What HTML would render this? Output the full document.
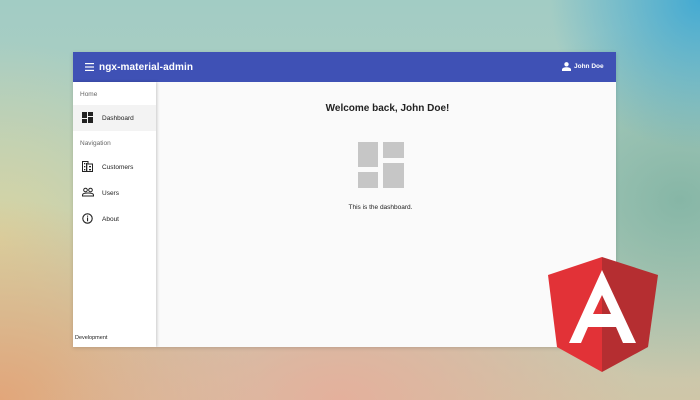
<!DOCTYPE html>
<html><head><style>
*{margin:0;padding:0;box-sizing:border-box}
body{width:700px;height:400px;overflow:hidden;position:relative;font-family:"Liberation Sans",sans-serif;
background:
radial-gradient(circle at 700px 0px,#44aad2 0,rgba(68,170,210,0) 150px),
radial-gradient(ellipse 220px 180px at 680px 200px,#86b6a6 0,rgba(134,182,166,0) 100%),
radial-gradient(ellipse 300px 180px at 340px 400px,#e4b09c 0,rgba(228,176,156,0) 100%),
radial-gradient(ellipse 260px 200px at 0px 400px,#e2a67a 0,rgba(226,166,122,0) 100%),
radial-gradient(ellipse 200px 200px at 0px 240px,#d8d4a2 0,rgba(216,212,162,0) 100%),
linear-gradient(180deg,#a2ccc4 0%,#b4d0c0 50%,#cfc6a8 100%);}
.win{position:absolute;left:73px;top:52px;width:543px;height:295px;background:#fafafa;overflow:hidden;box-shadow:0 1px 4px rgba(0,0,0,.15)}
.hdr{position:absolute;left:0;top:0;width:543px;height:30px;background:#3f51b5;color:#fff}
.title{position:absolute;left:26px;top:10px;font-size:10px;font-weight:bold;letter-spacing:.1px}
.user{position:absolute;left:501px;top:11px;font-size:6.5px;font-weight:bold}
.side{position:absolute;left:0;top:30px;width:83px;height:265px;background:#fff;box-shadow:1px 0 3px rgba(0,0,0,.2)}
.sec{position:absolute;left:7px;font-size:6.5px;color:#666}
.item{position:absolute;left:0;width:83px;height:25px;font-size:6.5px;color:#222}
.item span{position:absolute;left:29px;top:10px}
.item svg{position:absolute;left:9px;top:7px}
</style></head><body>
<div class="win">
 <div class="hdr">
  <svg style="position:absolute;left:12px;top:11px" width="9" height="8"><rect y="0" width="9" height="1.2" fill="#fff"/><rect y="3.4" width="9" height="1.2" fill="#fff"/><rect y="6.8" width="9" height="1.2" fill="#fff"/></svg>
  <div class="title">ngx-material-admin</div>
  <svg style="position:absolute;left:489px;top:10px" width="9" height="9"><circle cx="4.5" cy="2.3" r="2.2" fill="#fff"/><path d="M0 9V7.5C0 6 2.5 5.3 4.5 5.3S9 6 9 7.5V9Z" fill="#fff"/></svg>
  <div class="user">John Doe</div>
 </div>
 <div class="side">
  <div class="sec" style="top:9px">Home</div>
  <div class="item" style="top:23px;background:#f3f3f3;height:26px"><svg width="11" height="11"><rect x="0" y="0" width="5" height="6" fill="#222"/><rect x="6" y="0" width="5" height="4" fill="#222"/><rect x="0" y="7" width="5" height="4" fill="#222"/><rect x="6" y="5" width="5" height="6" fill="#222"/></svg><span>Dashboard</span></div>
  <div class="sec" style="top:58px">Navigation</div>
  <div class="item" style="top:72px"><svg width="11" height="11"><path d="M0.5 10.5V0.5H6V3H10.5V10.5Z" fill="none" stroke="#222"/><rect x="2" y="2" width="1.3" height="1.3" fill="#222"/><rect x="2" y="5" width="1.3" height="1.3" fill="#222"/><rect x="2" y="8" width="1.3" height="1.3" fill="#222"/><rect x="7" y="5" width="2" height="1.3" fill="#222"/><rect x="7" y="8" width="2" height="1.3" fill="#222"/><rect x="4" y="2" width="1.3" height="8" fill="#222"/></svg><span>Customers</span></div>
  <div class="item" style="top:98px"><svg width="12" height="11"><circle cx="3.5" cy="3" r="1.8" fill="none" stroke="#222" stroke-width="1"/><circle cx="8.5" cy="3" r="1.8" fill="none" stroke="#222" stroke-width="1"/><path d="M0.5 9V8C0.5 6.5 3 6 6 6S11.5 6.5 11.5 8V9Z" fill="none" stroke="#222"/></svg><span>Users</span></div>
  <div class="item" style="top:124px"><svg width="11" height="11"><circle cx="5.5" cy="5.5" r="4.7" fill="none" stroke="#222" stroke-width="1.1"/><rect x="5" y="4.5" width="1.1" height="3.8" fill="#222"/><rect x="5" y="2.6" width="1.1" height="1.1" fill="#222"/></svg><span>About</span></div>
  <div style="position:absolute;left:2px;top:253px;font-size:5.5px;color:#222">Development</div>
 </div>
 <div style="position:absolute;left:86px;top:30px;width:457px;height:265px">
  <div style="position:absolute;left:0;width:457px;top:21px;text-align:center;font-size:10px;font-weight:bold;color:#222">Welcome back, John Doe!</div>
  <svg style="position:absolute;left:199px;top:60px" width="47" height="47"><rect x="0" y="0" width="20" height="25" fill="#c6c6c6"/><rect x="25" y="0" width="21" height="16" fill="#c6c6c6"/><rect x="0" y="30" width="20" height="16" fill="#c6c6c6"/><rect x="25" y="21" width="21" height="25" fill="#c6c6c6"/></svg>
  <div style="position:absolute;left:0;width:443px;top:122px;text-align:center;font-size:6.5px;color:#222">This is the dashboard.</div>
 </div>
</div>
<svg style="position:absolute;left:0;top:0" width="700" height="400">
 <polygon points="602,257 548,275 557,347 602,372" fill="#e23237"/>
 <polygon points="602,257 658,275 648,347 602,372" fill="#b52e31"/>
 <path d="M602,270 L569,343 L581,343 L588,327 L616,327 L623,343 L636,343 Z M602,295 L611,314 L593,314 Z" fill="#fff" fill-rule="evenodd"/>
</svg>
</body></html>
